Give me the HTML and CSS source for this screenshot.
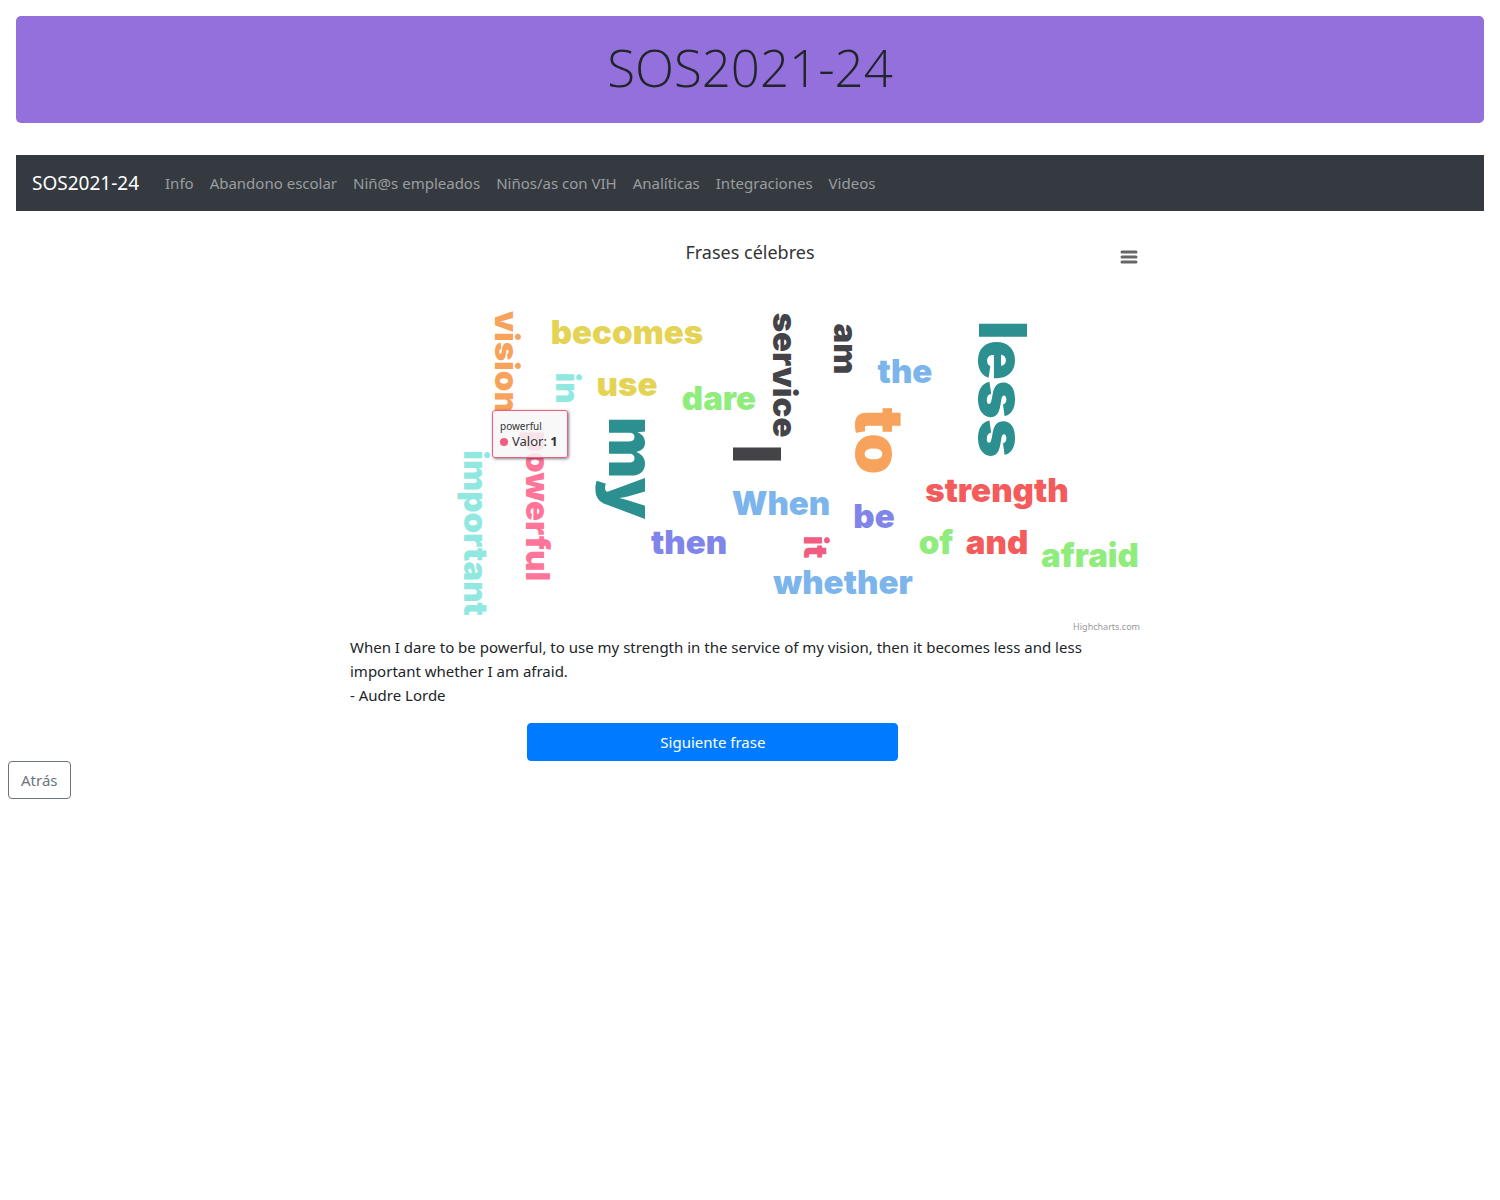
FILE: index.html
```html
<!DOCTYPE html>
<html lang="es">
<head>
<meta charset="utf-8">
<meta name="viewport" content="width=device-width, initial-scale=1">
<title>SOS2021-24</title>
<link rel="stylesheet" href="styles.css">
</head>
<body>
<header class="hero"><h1 class="hero-title">SOS2021-24</h1></header>
<nav class="navbar">
  <a class="brand" href="#">SOS2021-24</a>
  <a class="nav-link" href="#">Info</a>
  <a class="nav-link" href="#">Abandono escolar</a>
  <a class="nav-link" href="#">Niñ@s empleados</a>
  <a class="nav-link" href="#">Niños/as con VIH</a>
  <a class="nav-link" href="#">Analíticas</a>
  <a class="nav-link" href="#">Integraciones</a>
  <a class="nav-link" href="#">Videos</a>
</nav>
<main>
  <figure class="figure">
    <div class="chart">
      <h2 class="chart-title">Frases célebres</h2>
      <button class="menu" type="button" aria-label="Menú del gráfico">
        <svg width="18" height="14" viewBox="0 0 18 14"><path d="M2 2H16M2 7H16M2 12H16" stroke="#666" stroke-width="3" stroke-linecap="round"/></svg>
      </button>
      <svg class="cloud" viewBox="0 0 800 400" role="img" aria-label="Nube de palabras">
        <g class="small">
          <text class="yellow" x="277" y="109">becomes</text>
          <text class="yellow" x="277" y="161">use</text>
          <text class="green" x="369" y="175">dare</text>
          <text class="blue" x="555" y="148">the</text>
          <text class="blue" x="431" y="280">When</text>
          <text class="violet" x="524" y="293">be</text>
          <text class="red" x="647" y="267">strength</text>
          <text class="violet" x="339" y="319">then</text>
          <text class="green" x="586" y="319">of</text>
          <text class="red" x="647" y="319">and</text>
          <text class="green" x="740" y="332">afraid</text>
          <text class="blue" x="493" y="359">whether</text>
          <text class="orange" transform="translate(145 127) rotate(90)">vision</text>
          <text class="aqua" transform="translate(206 153) rotate(90)">in</text>
          <text class="aqua" transform="translate(114 298) rotate(90)">important</text>
          <text class="hot" transform="translate(176 271) rotate(90)">powerful</text>
          <text class="dark" transform="translate(423 140) rotate(90)">service</text>
          <text class="dark" transform="translate(484 114) rotate(90)">am</text>
          <text class="pink" transform="translate(454 312) rotate(90)">it</text>
        </g>
        <g class="large">
          <text class="teal" transform="translate(259 233) rotate(90)">my</text>
          <text class="dark" transform="translate(383 219) rotate(90)">I</text>
          <text class="orange" transform="translate(506 206) rotate(90)">to</text>
          <text class="teal" transform="translate(629 154) rotate(90)">less</text>
        </g>
      </svg>
      <div class="tooltip"><span class="tip-name">powerful</span><span class="tip-row"><i class="dot"></i>Valor: <b>1</b></span></div>
      <a class="credits" href="#">Highcharts.com</a>
    </div>
    <figcaption class="quote">When I dare to be powerful, to use my strength in the service of my vision, then it becomes less and less important whether I am afraid.<br>- Audre Lorde</figcaption>
  </figure>
  <button class="btn next" type="button">Siguiente frase</button>
  <button class="btn back" type="button">Atrás</button>
</main>
</body>
</html>
```

FILE: styles.css
```css
* { box-sizing: border-box; }
body {
  margin: 0;
  padding: 8px;
  background: #fff;
  color: #212529;
  font: 15px/24px "Noto Sans", "Open Sans", sans-serif;
}
.hero {
  margin: 8px 8px 32px;
  padding: 16px;
  border-radius: 5px;
  background: #9370db;
  text-align: center;
}
.hero-title {
  margin: 0;
  padding: 2px 0 6px;
  font-family: "Open Sans", sans-serif;
  font-size: 51px;
  font-weight: 300;
  line-height: 67px;
}
.navbar {
  display: flex;
  align-items: center;
  margin: 0 8px;
  padding: 8px 16px;
  min-height: 56px;
  background: #343a40;
}
.brand { margin-right: 18px; color: #fff; font-size: 19px; text-decoration: none; }
.nav-link { padding: 8px; color: rgba(255, 255, 255, .5); text-decoration: none; }
.figure { max-width: 800px; margin: 24px auto 16px; }
.chart { position: relative; }
.chart-title {
  position: absolute;
  top: 5px;
  left: 0;
  right: 0;
  margin: 0;
  color: #333;
  font-size: 18px;
  font-weight: 400;
  text-align: center;
}
.menu {
  position: absolute;
  top: 11px;
  right: 8px;
  padding: 4px;
  border: 0;
  background: none;
}
.menu svg { display: block; fill: none; }
.cloud { display: block; width: 100%; }
.cloud text { font-family: Inter, sans-serif; font-weight: 900; text-anchor: middle; }
.small text { font-size: 33px; }
.large text { font-size: 66px; }
.yellow { fill: #e4d354; }
.green { fill: #90ed7d; }
.blue { fill: #7cb5ec; }
.violet { fill: #8085e9; }
.red { fill: #f45b5b; }
.orange { fill: #f7a35c; }
.aqua { fill: #91e8e1; }
.hot { fill: #ff7599; }
.pink { fill: #f15c80; }
.dark { fill: #434348; }
.teal { fill: #2b908f; }
.tooltip {
  position: absolute;
  top: 175px;
  left: 142px;
  display: flex;
  flex-direction: column;
  padding: 8px 7px;
  width: 76px;
  border: 1px solid #f15c80;
  border-radius: 3px;
  background: rgba(247, 247, 247, .85);
  box-shadow: 1px 1px 3px rgba(0, 0, 0, .5);
  color: #333;
  font-size: 13px;
  line-height: 15px;
  white-space: nowrap;
}
.tip-name { font-size: 10px; }
.dot {
  display: inline-block;
  width: 8px;
  height: 8px;
  margin-right: 4px;
  border-radius: 50%;
  background: #f15c80;
}
.credits {
  position: absolute;
  right: 10px;
  bottom: 3px;
  color: #999;
  font-size: 9px;
  line-height: 11px;
  text-decoration: none;
}
.btn {
  display: block;
  height: 38px;
  padding: 6px 12px;
  border: 1px solid;
  border-radius: 4px;
  font: inherit;
}
.next { width: 25%; margin-left: 35%; border-color: #007bff; background: #007bff; color: #fff; }
.back { border-color: #6c757d; background: #fff; color: #6c757d; }
```
